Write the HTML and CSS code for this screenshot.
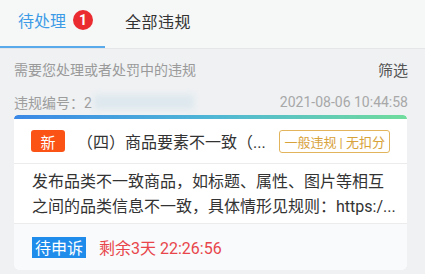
FILE: index.html
```html
<!DOCTYPE html>
<html lang="zh">
<head>
<meta charset="utf-8">
<link rel="stylesheet" href="styles.css">
</head>
<body>
<div class="tabs">
  <div class="tab active"><span>待处理</span><span class="badge">1</span></div>
  <div class="tab">全部违规</div>
</div>
<div class="sub">
  <span class="hint">需要您处理或者处罚中的违规</span>
  <span class="filter">筛选</span>
</div>
<div class="meta">
  <span class="num">违规编号：2<span class="redact"></span></span>
  <span class="date">2021-08-06 10:44:58</span>
</div>
<div class="card">
  <div class="bar"></div>
  <div class="head">
    <span class="new">新</span>
    <span class="title">（四）商品要素不一致（...</span>
    <span class="level">一般违规 | 无扣分</span>
  </div>
  <div class="desc"><div class="clamp">发布品类不一致商品，如标题、属性、图片等相互之间的品类信息不一致，具体情形见规则：https:/...</div></div>
  <div class="foot">
    <span class="status">待申诉</span>
    <span class="remain">剩余3天 22:26:56</span>
  </div>
</div>
</body>
</html>
```
FILE: styles.css
```css
* { box-sizing: border-box; }
body {
  margin: 0;
  background: #eff1f3;
  font-family: Roboto, "Noto Sans CJK SC", sans-serif;
  color: #333;
  width: 425px;
  overflow: hidden;
}
.tabs {
  display: flex;
  height: 49px;
  background: #f6f7f7;
  border-bottom: 1px solid #e4e6e8;
}
.tab {
  display: flex;
  align-items: center;
  font-size: 16px;
  color: #333;
  padding-left: 20px;
  padding-bottom: 7px;
  letter-spacing: 0.5px;
}
.tab.active {
  width: 105px;
  justify-content: flex-start;
  padding-left: 18px;
  color: #3b9be6;
  border-bottom: 2px solid #58aaea;
  letter-spacing: 0;
}
.badge {
  margin-left: 7px;
  width: 20px;
  height: 20px;
  border-radius: 50%;
  background: #ea2c30;
  color: #fff;
  font-size: 14px;
  font-weight: bold;
  display: flex;
  align-items: center;
  justify-content: center;
}
.sub {
  display: flex;
  justify-content: space-between;
  align-items: center;
  height: 40px;
  padding: 0 17px 0 14px;
}
.hint { font-size: 14px; color: #9a9a9a; }
.filter { font-size: 15px; color: #555; }
.meta {
  display: flex;
  justify-content: space-between;
  align-items: center;
  height: 26px;
  padding: 0 17px 0 14px;
  font-size: 14px;
  color: #9d9d9d;
}
.num { display: flex; align-items: center; }
.redact {
  display: inline-block;
  width: 100px;
  height: 14px;
  margin-left: 2px;
  background: #dde8ee;
  filter: blur(3px);
}
.date { color: #a8a8a8; }
.card {
  margin: 0 18px 0 14px;
  background: #fff;
  border-radius: 4px 4px 6px 6px;
  overflow: hidden;
}
.bar {
  height: 4px;
  background: linear-gradient(90deg, #3a88e6, #4fb6d6 50%, #70dc9c);
  border-radius: 4px 4px 0 0;
}
.head {
  display: flex;
  align-items: center;
  height: 45px;
  padding: 0 17px 0 17px;
  border-bottom: 1px solid #ececec;
}
.new {
  width: 34px;
  height: 22px;
  background: #fb5316;
  color: #fff;
  border-radius: 3px;
  font-size: 15px;
  display: flex;
  align-items: center;
  justify-content: center;
}
.title {
  flex: 1;
  margin-left: 12px;
  font-size: 16px;
  color: #333;
  white-space: nowrap;
}
.level {
  height: 23px;
  padding: 0 4px;
  border: 1px solid #e2b55c;
  border-radius: 3px;
  color: #d8a23a;
  font-size: 13px;
  display: flex;
  align-items: center;
}
.desc {
  padding: 5px 8px 4px 18px;
  border-bottom: 1px solid #ececec;
}
.clamp {
  font-size: 16px;
  line-height: 25px;
  height: 50px;
  color: #333;
  overflow: hidden;
  word-break: break-all;
}
.foot {
  display: flex;
  align-items: center;
  height: 46px;
  padding: 0 18px;
  background: #f8fafb;
}
.status {
  background: #1f8ceb;
  color: #fff;
  font-size: 16px;
  height: 21px;
  padding: 0 3px;
  display: flex;
  align-items: center;
}
.remain {
  margin-left: 13px;
  font-size: 16px;
  color: #e8464b;
}
```
